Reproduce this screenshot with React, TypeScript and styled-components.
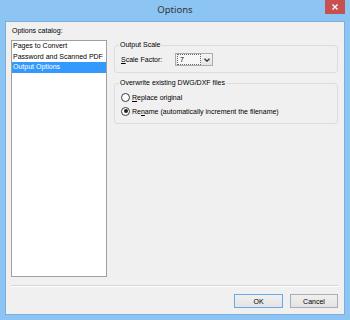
import React from "react";
import styled, { createGlobalStyle } from "styled-components";

const GlobalStyle = createGlobalStyle`
  html, body {
    margin: 0;
    padding: 0;
    background: #8cc4f4;
  }
  body {
    font-family: "Liberation Sans", Arial, sans-serif;
  }
`;

const Window = styled.div`
  width: 350px;
  height: 320px;
  box-sizing: border-box;
  background: #8cc4f4;
  padding: 0 5px 5px;
  display: flex;
  flex-direction: column;
`;

const TitleBar = styled.div`
  height: 21px;
  display: grid;
  grid-template-columns: 1fr auto 1fr;
  align-items: start;
`;

const Title = styled.div`
  grid-column: 2;
  font-family: "Noto Sans", "Open Sans", sans-serif;
  font-size: 9.5px;
  line-height: 20px;
  color: #333;
`;

const CloseButton = styled.div`
  grid-column: 3;
  justify-self: end;
  width: 20px;
  height: 14px;
  background: #c75050;
  display: flex;
  align-items: center;
  justify-content: center;
`;

const Client = styled.div`
  flex: 1;
  background: #f0f0f0;
  border: 1px solid #7eaedb;
  padding: 4px 6px 6px 5px;
  display: flex;
  flex-direction: column;
  font-size: 7px;
  color: #000;
`;

const CatalogLabel = styled.div`
  height: 10px;
  line-height: 10px;
  margin: 0 0 4px 1px;
`;

const Body = styled.div`
  display: grid;
  grid-template-columns: 96px 1fr;
  column-gap: 7px;
  height: 237px;
`;

const ListBox = styled.div`
  box-sizing: border-box;
  height: 237px;
  border: 1px solid #a0a0a0;
  background: #fff;
`;

const ListItem = styled.div<{ $selected?: boolean }>`
  height: 10.5px;
  line-height: 10.5px;
  padding-left: 1px;
  white-space: nowrap;
  background: ${(p) => (p.$selected ? "#3399ff" : "transparent")};
  color: ${(p) => (p.$selected ? "#fff" : "#000")};
`;

const Groups = styled.div`
  display: flex;
  flex-direction: column;
  gap: 5px;
`;

const GroupBox = styled.fieldset<{ $pad: string }>`
  margin: 0;
  min-width: 0;
  border: 1px solid #dcdcdc;
  border-radius: 3px;
  padding: ${(p) => p.$pad};
`;

const Legend = styled.legend`
  padding: 0 1px;
  margin-left: -2px;
  line-height: 10px;
  font-size: 7px;
`;

const ScaleRow = styled.div`
  display: flex;
  align-items: center;
  height: 13px;
`;

const FieldLabel = styled.span`
  width: 54px;
`;

const Combo = styled.div`
  box-sizing: border-box;
  width: 38px;
  height: 13px;
  border: 1px solid #acacac;
  background: linear-gradient(#f4f4f4, #e4e4e4);
  display: flex;
  align-items: center;
  padding: 0 0 0 1px;
`;

const ComboValue = styled.div`
  box-sizing: border-box;
  width: 24px;
  height: 11px;
  border: 1px dotted #666;
  background: #f7f7f7;
  line-height: 9px;
  padding-left: 2px;
`;

const ComboArrow = styled.div`
  flex: 1;
  display: flex;
  align-items: center;
  justify-content: center;
`;

const RadioRow = styled.label`
  display: flex;
  align-items: center;
  gap: 2px;
  height: 14px;
`;

const RadioCircle = styled.span<{ $checked?: boolean }>`
  box-sizing: border-box;
  width: 9px;
  height: 9px;
  border-radius: 50%;
  border: 1px solid #3a3a3a;
  background: #fff;
  display: flex;
  align-items: center;
  justify-content: center;

  &::after {
    content: "";
    width: 4px;
    height: 4px;
    border-radius: 50%;
    background: ${(p) => (p.$checked ? "#222" : "transparent")};
  }
`;

const Separator = styled.div`
  margin-top: 8px;
  border-top: 1px solid #d5d5d5;
  border-bottom: 1px solid #fff;
`;

const ButtonRow = styled.div`
  margin-top: 7px;
  display: flex;
  justify-content: flex-end;
  gap: 7px;
`;

const Button = styled.div<{ $default?: boolean; $width: number }>`
  box-sizing: border-box;
  width: ${(p) => p.$width}px;
  height: 14px;
  border: 1px solid ${(p) => (p.$default ? "#6aa8e8" : "#adadad")};
  background: linear-gradient(#f0f0f0, #e3e3e3);
  display: flex;
  align-items: center;
  justify-content: center;
  font-size: 7px;
`;

export default function App() {
  return (
    <>
      <GlobalStyle />
      <Window>
        <TitleBar>
          <Title>Options</Title>
          <CloseButton>
            <svg width="6" height="6" viewBox="0 0 6 6">
              <path d="M0.5 0.5 L5.5 5.5 M5.5 0.5 L0.5 5.5" stroke="#fff" strokeWidth="1.4" />
            </svg>
          </CloseButton>
        </TitleBar>
        <Client>
          <CatalogLabel>Options catalog:</CatalogLabel>
          <Body>
            <ListBox>
              <ListItem>Pages to Convert</ListItem>
              <ListItem>Password and Scanned PDF</ListItem>
              <ListItem $selected>Output Options</ListItem>
            </ListBox>
            <Groups>
              <GroupBox $pad="3px 6px 6px">
                <Legend>Output Scale</Legend>
                <ScaleRow>
                  <FieldLabel>
                    <u>S</u>cale Factor:
                  </FieldLabel>
                  <Combo>
                    <ComboValue>7</ComboValue>
                    <ComboArrow>
                      <svg width="6" height="4" viewBox="0 0 6 4">
                        <path d="M0.5 0.8 L3 3.2 L5.5 0.8" fill="none" stroke="#333" strokeWidth="1.3" />
                      </svg>
                    </ComboArrow>
                  </Combo>
                </ScaleRow>
              </GroupBox>
              <GroupBox $pad="2px 6px 5px">
                <Legend>Overwrite existing DWG/DXF files</Legend>
                <RadioRow>
                  <RadioCircle />
                  <span>
                    <u>R</u>eplace original
                  </span>
                </RadioRow>
                <RadioRow>
                  <RadioCircle $checked />
                  <span>
                    Re<u>n</u>ame (automatically increment the filename)
                  </span>
                </RadioRow>
              </GroupBox>
            </Groups>
          </Body>
          <Separator />
          <ButtonRow>
            <Button $default $width={49}>OK</Button>
            <Button $width={48}>Cancel</Button>
          </ButtonRow>
        </Client>
      </Window>
    </>
  );
}
